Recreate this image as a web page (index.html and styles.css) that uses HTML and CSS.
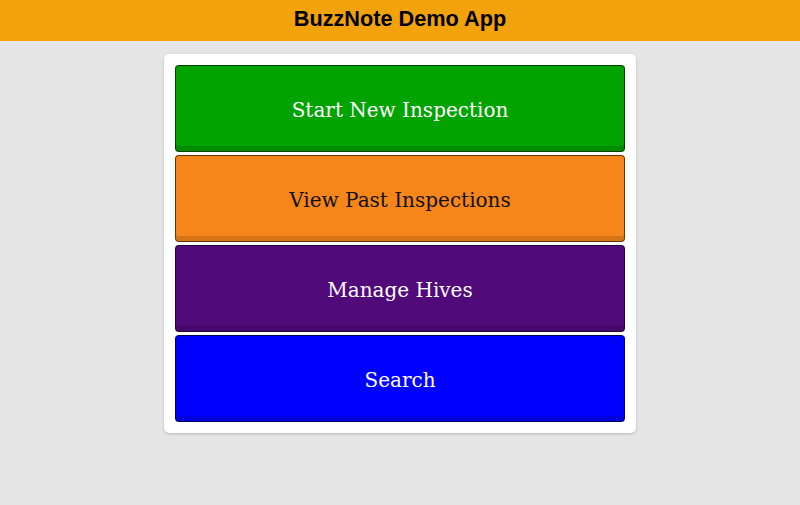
FILE: index.html
```html
<!DOCTYPE html>
<html>
<head>
<meta charset="utf-8">
<link rel="stylesheet" href="styles.css">
</head>
<body>
<header class="topbar">BuzzNote Demo App</header>
<main class="card">
  <button class="btn btn-green">Start New Inspection</button>
  <button class="btn btn-orange">View Past Inspections</button>
  <button class="btn btn-purple">Manage Hives</button>
  <button class="btn btn-blue">Search</button>
</main>
</body>
</html>
```
FILE: styles.css
```css
html, body {
  margin: 0;
  padding: 0;
  background: #e5e5e5;
  height: 100%;
}
body {
  display: flex;
  flex-direction: column;
  align-items: center;
}
.topbar {
  align-self: stretch;
  height: 41px;
  background: #f2a20a;
  color: #000;
  font-family: "Liberation Sans", Arial, sans-serif;
  font-weight: bold;
  font-size: 21.7px;
  display: flex;
  align-items: center;
  justify-content: center;
  box-sizing: border-box;
  padding-bottom: 3px;
}
.card {
  margin-top: 13px;
  width: 472px;
  box-sizing: border-box;
  background: #fff;
  border-radius: 5px;
  box-shadow: 0 1px 3px rgba(0,0,0,0.2);
  padding: 11px;
  display: flex;
  flex-direction: column;
  gap: 3px;
}
.btn {
  height: 87px;
  border: 1px solid rgba(0,0,0,0.6);
  border-radius: 4px;
  font-family: "DejaVu Serif", serif;
  font-size: 20px;
  display: flex;
  align-items: center;
  justify-content: center;
  padding: 2px 0 0 0;
  box-shadow: inset 0 -5px 0 rgba(0,0,0,0.13);
}
.btn-green { background: #00a300; color: #fff; }
.btn-orange { background: #f6861a; color: #111; }
.btn-purple { background: #510a7a; color: #fff; }
.btn-blue { background: #0000fe; color: #fff; }
```
